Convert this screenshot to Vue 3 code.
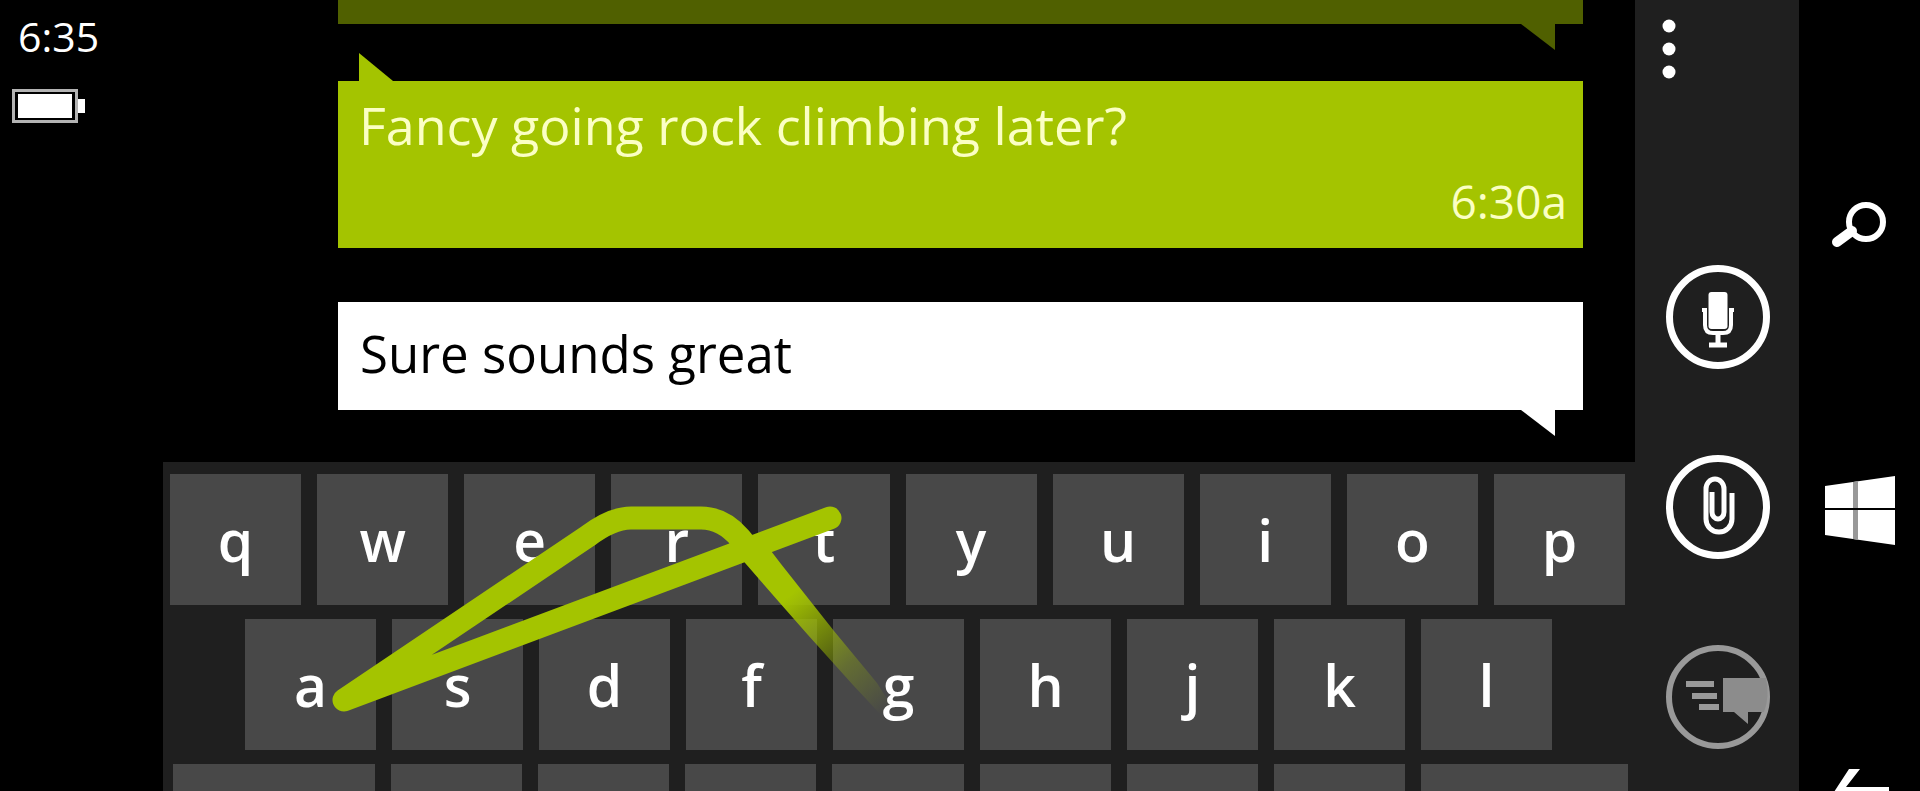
<script setup>
const rows = [
  { name: 'top', keys: ['q', 'w', 'e', 'r', 't', 'y', 'u', 'i', 'o', 'p'] },
  { name: 'home', keys: ['a', 's', 'd', 'f', 'g', 'h', 'j', 'k', 'l'] },
]
const lowerKeys = ['Shift', 'z', 'x', 'c', 'v', 'b', 'n', 'm', 'Backspace']
</script>

<template>
  <div class="phone">
    <aside class="status">
      <time class="clock">6:35</time>
      <svg class="battery" viewBox="0 0 74 34" role="img" aria-label="Battery full">
        <rect x="1.5" y="1.5" width="63" height="31" fill="none" stroke="#b4b4b4" stroke-width="3" />
        <rect x="6" y="5" width="54" height="24" fill="#fff" />
        <path d="M66 10h7v14h-7z" fill="#fff" />
      </svg>
    </aside>

    <main class="main">
      <section class="thread">
        <article class="bubble earlier">
          <svg class="tail tail-down" viewBox="0 0 34 26"><path d="M0 0h34v26z" /></svg>
        </article>
        <article class="bubble incoming">
          <svg class="tail tail-up" viewBox="0 0 34 28"><path d="M0 28V0l34 28z" /></svg>
          <p class="message">Fancy going rock climbing later?</p>
          <time class="sent">6:30a</time>
        </article>
        <form class="bubble draft" @submit.prevent>
          <input class="entry" type="text" value="Sure sounds great" aria-label="Message" />
          <svg class="tail tail-down" viewBox="0 0 34 26"><path d="M0 0h34v26z" /></svg>
        </form>
      </section>

      <section class="keyboard" aria-label="Keyboard">
        <div v-for="row in rows" :key="row.name" class="row" :class="row.name">
          <button v-for="k in row.keys" :key="k" type="button" class="key">{{ k }}</button>
        </div>
        <div class="row lower">
          <button v-for="k in lowerKeys" :key="k" type="button" class="key" :aria-label="k"></button>
        </div>
        <svg class="swipe" viewBox="0 0 1472 433" preserveAspectRatio="none" aria-hidden="true">
          <defs>
            <linearGradient id="fade" gradientUnits="userSpaceOnUse" x1="626" y1="134" x2="722" y2="250">
              <stop offset="0" stop-color="#a4c400" />
              <stop offset="0.3" stop-color="#a4c400" stop-opacity="0.65" />
              <stop offset="0.6" stop-color="#a4c400" stop-opacity="0.3" />
              <stop offset="1" stop-color="#a4c400" stop-opacity="0" />
            </linearGradient>
          </defs>
          <path
            d="M667 56L181 238L425 74Q449 56 468 56H538Q560 56 577 76L585 86"
            fill="none" stroke="#a4c400" stroke-width="23" stroke-linecap="round" stroke-linejoin="round"
          />
          <path d="M576 94L595 72L618 102L671 169L714 221L728 243L718 253L690 223L645 173L616 140Z" fill="url(#fade)" />
        </svg>
      </section>
    </main>

    <aside class="appbar">
      <button type="button" class="more" aria-label="More">
        <svg viewBox="0 0 14 60" width="14" height="60" fill="#fff">
          <circle cx="7" cy="7" r="6.5" /><circle cx="7" cy="30" r="6.5" /><circle cx="7" cy="53" r="6.5" />
        </svg>
      </button>
      <div class="actions">
        <button type="button" class="action" aria-label="Speak">
          <svg viewBox="0 0 104 104" fill="none" stroke="#fff">
            <circle cx="52" cy="52" r="48.5" stroke-width="7" />
            <rect x="42.5" y="27" width="19" height="37" rx="3" fill="#fff" stroke="none" />
            <path d="M36 45h3v15q0 8 8 8h10q8 0 8-8V45h3" stroke-width="4" />
            <path d="M52 69v11M43 80h18" stroke-width="5" />
          </svg>
        </button>
        <button type="button" class="action" aria-label="Attach">
          <svg viewBox="0 0 104 104" fill="none" stroke="#fff">
            <circle cx="52" cy="52" r="48.5" stroke-width="7" />
            <path d="M46 37V57a6 7 0 0 0 12 0V34a9 10 0 0 0-18 0V64a13 13 0 0 0 26 0V38" stroke-width="5" />
          </svg>
        </button>
        <button type="button" class="action" aria-label="Send" disabled>
          <svg viewBox="0 0 104 104" fill="none" stroke="#999">
            <circle cx="52" cy="52" r="49" stroke-width="6" />
            <path d="M20 39h28M26 51h25M33 62h20" stroke-width="6" />
            <path d="M57 33h43q4 18-2 34H82v12L68 67H57z" fill="#8c8c8c" stroke="none" />
          </svg>
        </button>
      </div>
    </aside>

    <nav class="nav" aria-label="System">
      <button type="button" class="hard" aria-label="Search">
        <svg viewBox="0 0 96 96" fill="none" stroke="#fff">
          <circle cx="53" cy="48" r="17" stroke-width="6" />
          <path d="M39 57L24 68" stroke-width="10" stroke-linecap="round" />
        </svg>
      </button>
      <button type="button" class="hard" aria-label="Start">
        <svg viewBox="0 0 96 96" fill="#fff">
          <path d="M12 26L82 16V85L12 75z" />
          <path d="M40 22l5-1v59l-5-1z" fill="#999" />
          <path d="M12 48h70v2H12z" fill="#000" />
        </svg>
      </button>
      <button type="button" class="hard" aria-label="Back">
        <svg viewBox="0 0 96 96" fill="#fff">
          <path d="M36 23h11L33 41h43v8H33l14 18H36L21 46z" />
        </svg>
      </button>
    </nav>
  </div>
</template>

<style>
body {
  background: #000;
}
</style>

<style scoped>
.phone {
  display: grid;
  grid-template-columns: 163px 1fr 164px 121px;
  height: 100vh;
  overflow: hidden;
  background: #000;
  color: #fff;
  font-family: "Open Sans", "Noto Sans", sans-serif;
}
.phone > * {
  min-height: 0;
  min-width: 0;
}
button {
  display: grid;
  place-items: center;
  margin: 0;
  padding: 0;
  border: 0;
  background: none;
  color: inherit;
  font: inherit;
}
svg {
  display: block;
}
.status {
  display: flex;
  flex-direction: column;
  align-items: flex-start;
  gap: 23px;
  padding: 6px 12px;
}
.clock {
  padding-left: 6px;
  font-size: 41px;
  line-height: 60px;
}
.battery {
  width: 74px;
  height: 34px;
}
.thread {
  display: flex;
  flex-direction: column;
  padding: 0 52px 52px 175px;
}
.bubble {
  position: relative;
}
.earlier {
  height: 24px;
  margin-bottom: 57px;
  background: #506000;
  fill: #506000;
}
.incoming {
  display: flex;
  flex-direction: column;
  margin-bottom: 54px;
  padding: 6px 16px 12px 21px;
  background: #a4c400;
  color: #fbffc4;
  fill: #a4c400;
}
.message {
  margin: 0 0 4px;
  font-size: 52px;
  line-height: 76px;
}
.sent {
  align-self: flex-end;
  font-size: 46px;
  line-height: 69px;
}
.draft {
  background: #fff;
  fill: #fff;
}
.entry {
  display: block;
  box-sizing: border-box;
  width: 100%;
  height: 108px;
  padding: 0 22px 6px;
  border: 0;
  outline: 0;
  background: transparent;
  color: #000;
  font: inherit;
  font-size: 51px;
}
.tail {
  position: absolute;
  width: 34px;
}
.tail-down {
  top: 100%;
  right: 28px;
}
.tail-up {
  bottom: 100%;
  left: 21px;
}
.keyboard {
  position: relative;
  display: flex;
  flex-direction: column;
  gap: 14px;
  padding-top: 12px;
  background: #1f1f1f;
}
.row {
  display: grid;
  grid-auto-columns: 1fr;
  grid-auto-flow: column;
  gap: 16px;
}
.top {
  padding: 0 10px 0 7px;
}
.home {
  padding: 0 83px 0 82px;
}
.lower {
  grid-template-columns: 202fr repeat(7, 131fr) 207fr;
  padding: 0 7px 0 10px;
}
.key {
  height: 131px;
  background: #484848;
  font-size: 57px;
  font-weight: 600;
  line-height: 76px;
}
.swipe {
  position: absolute;
  inset: 0;
  width: 100%;
  height: 100%;
  pointer-events: none;
}
.appbar {
  display: flex;
  flex-direction: column;
  background: #1f1f1f;
}
.more {
  width: 68px;
  height: 98px;
}
.actions {
  display: flex;
  flex-direction: column;
  align-items: center;
  gap: 86px;
  padding: 167px 0 0 2px;
}
.action svg {
  width: 104px;
  height: 104px;
}
.nav {
  display: flex;
  flex-direction: column;
  align-items: center;
  gap: 190px;
  padding: 174px 0 0 2px;
}
.hard svg {
  width: 96px;
  height: 96px;
}
</style>
